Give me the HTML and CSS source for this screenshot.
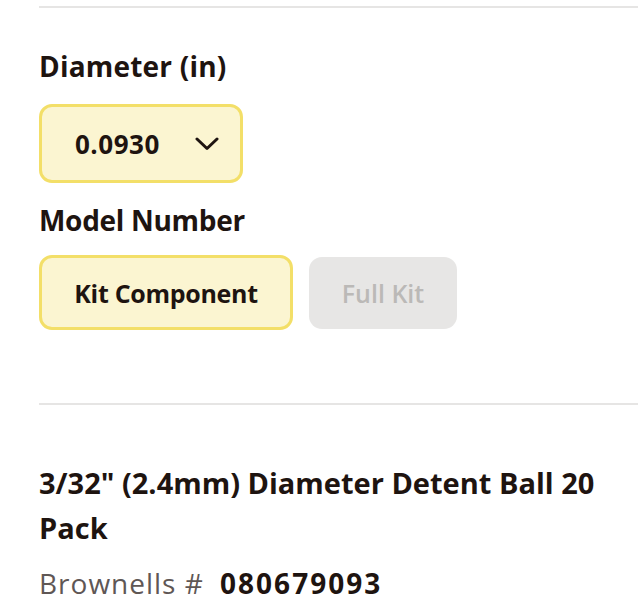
FILE: index.html
```html
<!DOCTYPE html>
<html lang="en">
<head>
<meta charset="UTF-8" />
<meta name="viewport" content="width=device-width, initial-scale=1" />
<title>Detent Ball</title>
<link rel="stylesheet" href="styles.css">
</head>
<body>

<main class="product">
  <hr class="divider divider-top">

  <section class="option">
    <h2 class="option-label">Diameter (in)</h2>
    <button class="select" type="button">
      <span class="select-value">0.0930</span>
      <svg class="chevron" width="24" height="14" viewBox="0 0 24 14" aria-hidden="true">
        <path d="M2 2 L12 11.5 L22 2" fill="none" stroke="#1e1410" stroke-width="3" stroke-linecap="round" stroke-linejoin="round"/>
      </svg>
    </button>
  </section>

  <section class="option">
    <h2 class="option-label">Model Number</h2>
    <div class="choices">
      <button class="choice active" type="button">Kit Component</button>
      <button class="choice disabled" type="button">Full Kit</button>
    </div>
  </section>

  <hr class="divider divider-bottom">

  <section class="item">
    <h1 class="item-title">3/32" (2.4mm) Diameter Detent Ball 20 Pack</h1>
    <p class="item-sku"><span class="sku-label">Brownells #</span> <strong class="sku-num">080679093</strong></p>
  </section>
</main>

</body>
</html>
```

FILE: styles.css
```css
* {
  box-sizing: border-box;
}
body {
  margin: 0;
  padding: 0;
  font-family: 'Open Sans', Roboto, sans-serif;
  color: #1e1410;
  background: #fff;
}

.product {
  padding-left: 39px;
  padding-top: 6px;
}

.divider {
  border: 0;
  border-top: 2px solid #e6e5e4;
  margin: 0;
}
.divider-bottom {
  margin-top: 73px;
}

.option-label {
  margin: 0;
  font-size: 28px;
  line-height: 34px;
  font-weight: 700;
  letter-spacing: -0.3px;
}
.option:first-of-type .option-label {
  margin-top: 41px;
  letter-spacing: 0.2px;
}
.option + .option .option-label {
  margin-top: 20px;
}

.select {
  margin-top: 21px;
  width: 204px;
  height: 79px;
  display: flex;
  align-items: center;
  justify-content: space-between;
  padding: 0 21px 0 33px;
  background: #fbf5d1;
  border: 3px solid #f3df68;
  border-radius: 13px;
  font-family: inherit;
  color: inherit;
  cursor: pointer;
}
.select-value {
  font-size: 26px;
  font-weight: 700;
  letter-spacing: 0.5px;
}

.choices {
  display: flex;
  align-items: center;
  gap: 16px;
  margin-top: 18px;
}
.choice {
  height: 75px;
  border-radius: 13px;
  font-family: inherit;
  font-size: 25px;
  font-weight: 700;
  letter-spacing: -0.3px;
  cursor: pointer;
}
.choice.active {
  width: 254px;
  background: #fbf5d1;
  border: 3px solid #f3df68;
  color: #1e1410;
}
.choice.disabled {
  width: 148px;
  height: 72px;
  background: #e7e6e5;
  border: 0;
  color: #bbb9b7;
  font-weight: 600;
  letter-spacing: 0;
}

.item-title {
  margin: 55px 0 0;
  padding-right: 20px;
  font-size: 29px;
  line-height: 45px;
  font-weight: 700;
  letter-spacing: 0;
}
.item-sku {
  margin: 16px 0 0;
  font-size: 28px;
  line-height: 34px;
}
.sku-label {
  color: #5f5755;
  letter-spacing: 1px;
  margin-right: 9px;
}
.sku-num {
  font-weight: 700;
  letter-spacing: 2px;
  color: #1e1410;
}
```
